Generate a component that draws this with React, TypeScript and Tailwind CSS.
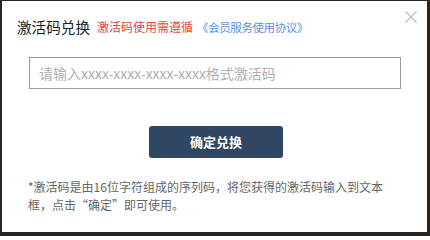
import React from "react";

export default function App() {
  const font = { fontFamily: '"Noto Sans CJK SC", "Noto Sans", sans-serif' };
  return (
    <div
      className="w-[430px] h-[236px] bg-[#2a2521] pt-[1px] pl-[2px] pr-[3px] pb-[4px]"
      style={font}
    >
      <div className="relative w-full h-full bg-white flex flex-col">
        <svg
          className="absolute left-[403px] top-[10px]"
          width="12"
          height="12"
          viewBox="0 0 12 12"
        >
          <path d="M0.5 0.5 L11.5 11.5 M11.5 0.5 L0.5 11.5" stroke="#bdbdbd" strokeWidth="1.3" fill="none" />
        </svg>
        <div className="flex items-center pt-[16px] pl-[15px] h-[36px] whitespace-nowrap">
          <span className="text-[14.6px] leading-[20px] text-[#222]">激活码兑换</span>
          <span className="ml-[7px] text-[12px] leading-[20px] text-[#e8483f]">激活码使用需遵循</span>
          <span className="ml-[4px] text-[11.5px] tracking-[-0.4px] leading-[20px] text-[#5e90df]">《会员服务使用协议》</span>
        </div>
        <div className="mt-[20px] ml-[27px] w-[372px] h-[32px] border border-[#9d9d9d] flex items-center pl-[9px]">
          <span className="text-[14px] text-[#b0b0b0] leading-[20px]">请输入xxxx-xxxx-xxxx-xxxx格式激活码</span>
        </div>
        <div className="mt-[37px] ml-[147px] w-[134px] h-[32px] rounded-[3px] bg-[#2f4762] flex items-center justify-center">
          <span className="text-[13px] font-bold text-white leading-[18px]">确定兑换</span>
        </div>
        <div className="mt-[20px] ml-[26px] w-[366px] text-[12px] leading-[18px] text-[#666]">
          *激活码是由16位字符组成的序列码，将您获得的激活码输入到文本框，点击“确定”即可使用。
        </div>
      </div>
    </div>
  );
}
